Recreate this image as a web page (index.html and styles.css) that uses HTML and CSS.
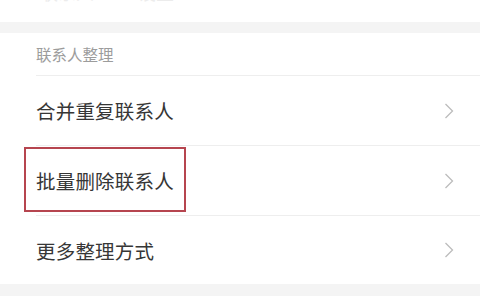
FILE: index.html
```html
<!DOCTYPE html>
<html lang="zh-CN">
<head>
<meta charset="utf-8">
<link rel="stylesheet" href="styles.css">
</head>
<body>
<div class="top"><span class="top-text">联系人</span><span class="top-text second">设置</span></div>
<div class="band"></div>
<section class="card">
  <div class="header">联系人整理</div>
  <div class="row"><span class="label">合并重复联系人</span><svg class="chev" width="10" height="16" viewBox="0 0 10 16"><path d="M1.5 1 L8.5 8 L1.5 15" fill="none" stroke="#bcbcbc" stroke-width="1.3"/></svg></div>
  <div class="row"><span class="label boxed">批量删除联系人</span><svg class="chev" width="10" height="16" viewBox="0 0 10 16"><path d="M1.5 1 L8.5 8 L1.5 15" fill="none" stroke="#bcbcbc" stroke-width="1.3"/></svg></div>
  <div class="row last"><span class="label">更多整理方式</span><svg class="chev" width="10" height="16" viewBox="0 0 10 16"><path d="M1.5 1 L8.5 8 L1.5 15" fill="none" stroke="#bcbcbc" stroke-width="1.3"/></svg></div>
</section>
<div class="band bottom"></div>
</body>
</html>
```
FILE: styles.css
```css
html, body {
  margin: 0;
  padding: 0;
  background: #ffffff;
  width: 480px;
  height: 300px;
  overflow: hidden;
  font-family: "Noto Sans CJK SC", "Noto Sans", sans-serif;
}
.top {
  height: 22px;
  overflow: hidden;
  padding-left: 40px;
  display: flex;
  gap: 44px;
}
.top-text {
  font-size: 18px;
  line-height: 18px;
  margin-top: -17px;
  color: #ececec;
}
.band {
  height: 11px;
  background: #f4f4f4;
}
.card {
  background: #ffffff;
  padding-left: 36px;
}
.header {
  height: 42px;
  display: flex;
  align-items: center;
  font-size: 15.5px;
  color: #9c9c9c;
  border-bottom: 1px solid #eeeeee;
}
.row {
  height: 69px;
  display: flex;
  align-items: center;
  justify-content: space-between;
  padding-right: 26px;
  border-bottom: 1px solid #eeeeee;
}
.row.last {
  border-bottom: none;
  height: 68px;
}
.label {
  font-size: 19.5px;
  color: #363636;
  letter-spacing: 0.2px;
}
.boxed {
  position: relative;
}
.boxed::after {
  content: "";
  position: absolute;
  left: -12px;
  right: -12px;
  top: -19px;
  bottom: -17px;
  border: 2px solid #b6454f;
}
.chev {
  display: block;
}
.band.bottom {
  height: 12px;
}
```
